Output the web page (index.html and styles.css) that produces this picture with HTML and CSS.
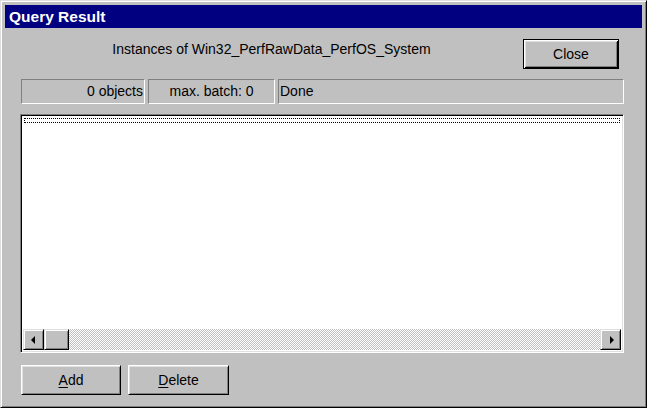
FILE: index.html
```html
<!DOCTYPE html>
<html>
<head>
<meta charset="utf-8">
<link rel="stylesheet" href="styles.css">
</head>
<body>
<div class="window">
  <div class="titlebar">Query Result</div>
  <div class="content">
    <div class="toprow">
      <div class="caption">Instances of Win32_PerfRawData_PerfOS_System</div>
      <button class="btn default close">Close</button>
    </div>
    <div class="status">
      <div class="panel p1">0 objects</div>
      <div class="panel p2">max. batch: 0</div>
      <div class="panel p3">Done</div>
    </div>
    <div class="listbox">
      <div class="listarea">
        <div class="focusrow"></div>
      </div>
      <div class="hscroll">
        <div class="sbtn"><span class="arrow left"></span></div>
        <div class="thumb"></div>
        <div class="track"></div>
        <div class="sbtn"><span class="arrow right"></span></div>
      </div>
    </div>
    <div class="bottomrow">
      <button class="btn add"><u>A</u>dd</button>
      <button class="btn delete"><u>D</u>elete</button>
    </div>
  </div>
</div>
</body>
</html>
```
FILE: styles.css
```css
html, body {
  margin: 0;
  padding: 0;
  background: #ffffff;
}
body {
  font-family: "Liberation Sans", Arial, sans-serif;
  font-size: 14px;
  color: #000;
}
.window {
  width: 647px;
  height: 408px;
  box-sizing: border-box;
  background: #c0c0c0;
  border: 1px solid;
  border-color: #dfdfdf #000000 #000000 #dfdfdf;
  box-shadow: inset 1px 1px #ffffff, inset -1px -1px #808080;
  padding: 4px;
  display: flex;
  flex-direction: column;
}
.titlebar {
  height: 23px;
  background: #000080;
  color: #ffffff;
  font-weight: bold;
  font-size: 15.5px;
  line-height: 23px;
  padding-left: 4px;
  flex: none;
}
.content {
  padding: 0 18px 0 15px;
  display: flex;
  flex-direction: column;
}
.toprow {
  margin-top: 11px;
  height: 30px;
  display: flex;
}
.caption {
  flex: 1;
  text-align: center;
  line-height: 16px;
  padding-top: 2px;
  padding-left: 0;
}
.btn {
  font-family: "Liberation Sans", Arial, sans-serif;
  font-size: 14px;
  color: #000;
  background: #c0c0c0;
  height: 30px;
  box-sizing: border-box;
  border: 1px solid;
  border-color: #ffffff #000000 #000000 #ffffff;
  box-shadow: inset 1px 1px #dfdfdf, inset -1px -1px #808080;
  padding: 0;
  margin: 0;
}
.btn u {
  text-decoration: underline;
  text-underline-offset: 2px;
}
.btn.default {
  border: 1px solid #000000;
  box-shadow: inset 1px 1px #ffffff, inset -1px -1px #000000, inset 2px 2px #dfdfdf, inset -2px -2px #808080;
}
.close {
  width: 96px;
  margin-right: 5px;
}
.status {
  margin-top: 10px;
  margin-left: 1px;
  height: 25px;
  display: flex;
  gap: 3px;
}
.panel {
  box-sizing: border-box;
  border: 1px solid;
  border-color: #808080 #ffffff #ffffff #808080;
  line-height: 23px;
  white-space: nowrap;
}
.p1 {
  width: 124px;
  text-align: right;
  padding-right: 1px;
}
.p2 {
  width: 127px;
  text-align: center;
}
.p3 {
  flex: 1;
  padding-left: 1px;
}
.listbox {
  margin-top: 10px;
  height: 239px;
  box-sizing: border-box;
  border: 1px solid;
  border-color: #808080 #ffffff #ffffff #808080;
  box-shadow: inset 1px 1px #000000, inset -1px -1px #dfdfdf;
  padding: 2px;
  background: #ffffff;
  display: flex;
  flex-direction: column;
}
.listarea {
  flex: 1;
  background: #ffffff;
  padding: 1px 1px 0 1px;
}
.focusrow {
  height: 5px;
  box-sizing: border-box;
  border: 1px dotted #000000;
}
.hscroll {
  height: 21px;
  display: flex;
  background: #c0c0c0;
}
.sbtn, .thumb {
  width: 21px;
  box-sizing: border-box;
  background: #c0c0c0;
  border: 1px solid;
  border-color: #dfdfdf #000000 #000000 #dfdfdf;
  box-shadow: inset 1px 1px #ffffff, inset -1px -1px #808080;
  display: flex;
  align-items: center;
  justify-content: center;
  flex: none;
}
.thumb {
  width: 25px;
}
.track {
  flex: 1;
  background-color: #ffffff;
  background-image: repeating-conic-gradient(#c0c0c0 0 25%, #ffffff 0 50%);
  background-size: 2px 2px;
}
.arrow {
  width: 0;
  height: 0;
  border-top: 4px solid transparent;
  border-bottom: 4px solid transparent;
}
.arrow.left {
  border-right: 4px solid #000;
  margin-right: 2px;
}
.arrow.right {
  border-left: 4px solid #000;
  margin-left: 2px;
}
.bottomrow {
  margin-top: 12px;
  margin-left: 1px;
  display: flex;
  gap: 7px;
}
.add {
  width: 100px;
}
.delete {
  width: 101px;
}
```
